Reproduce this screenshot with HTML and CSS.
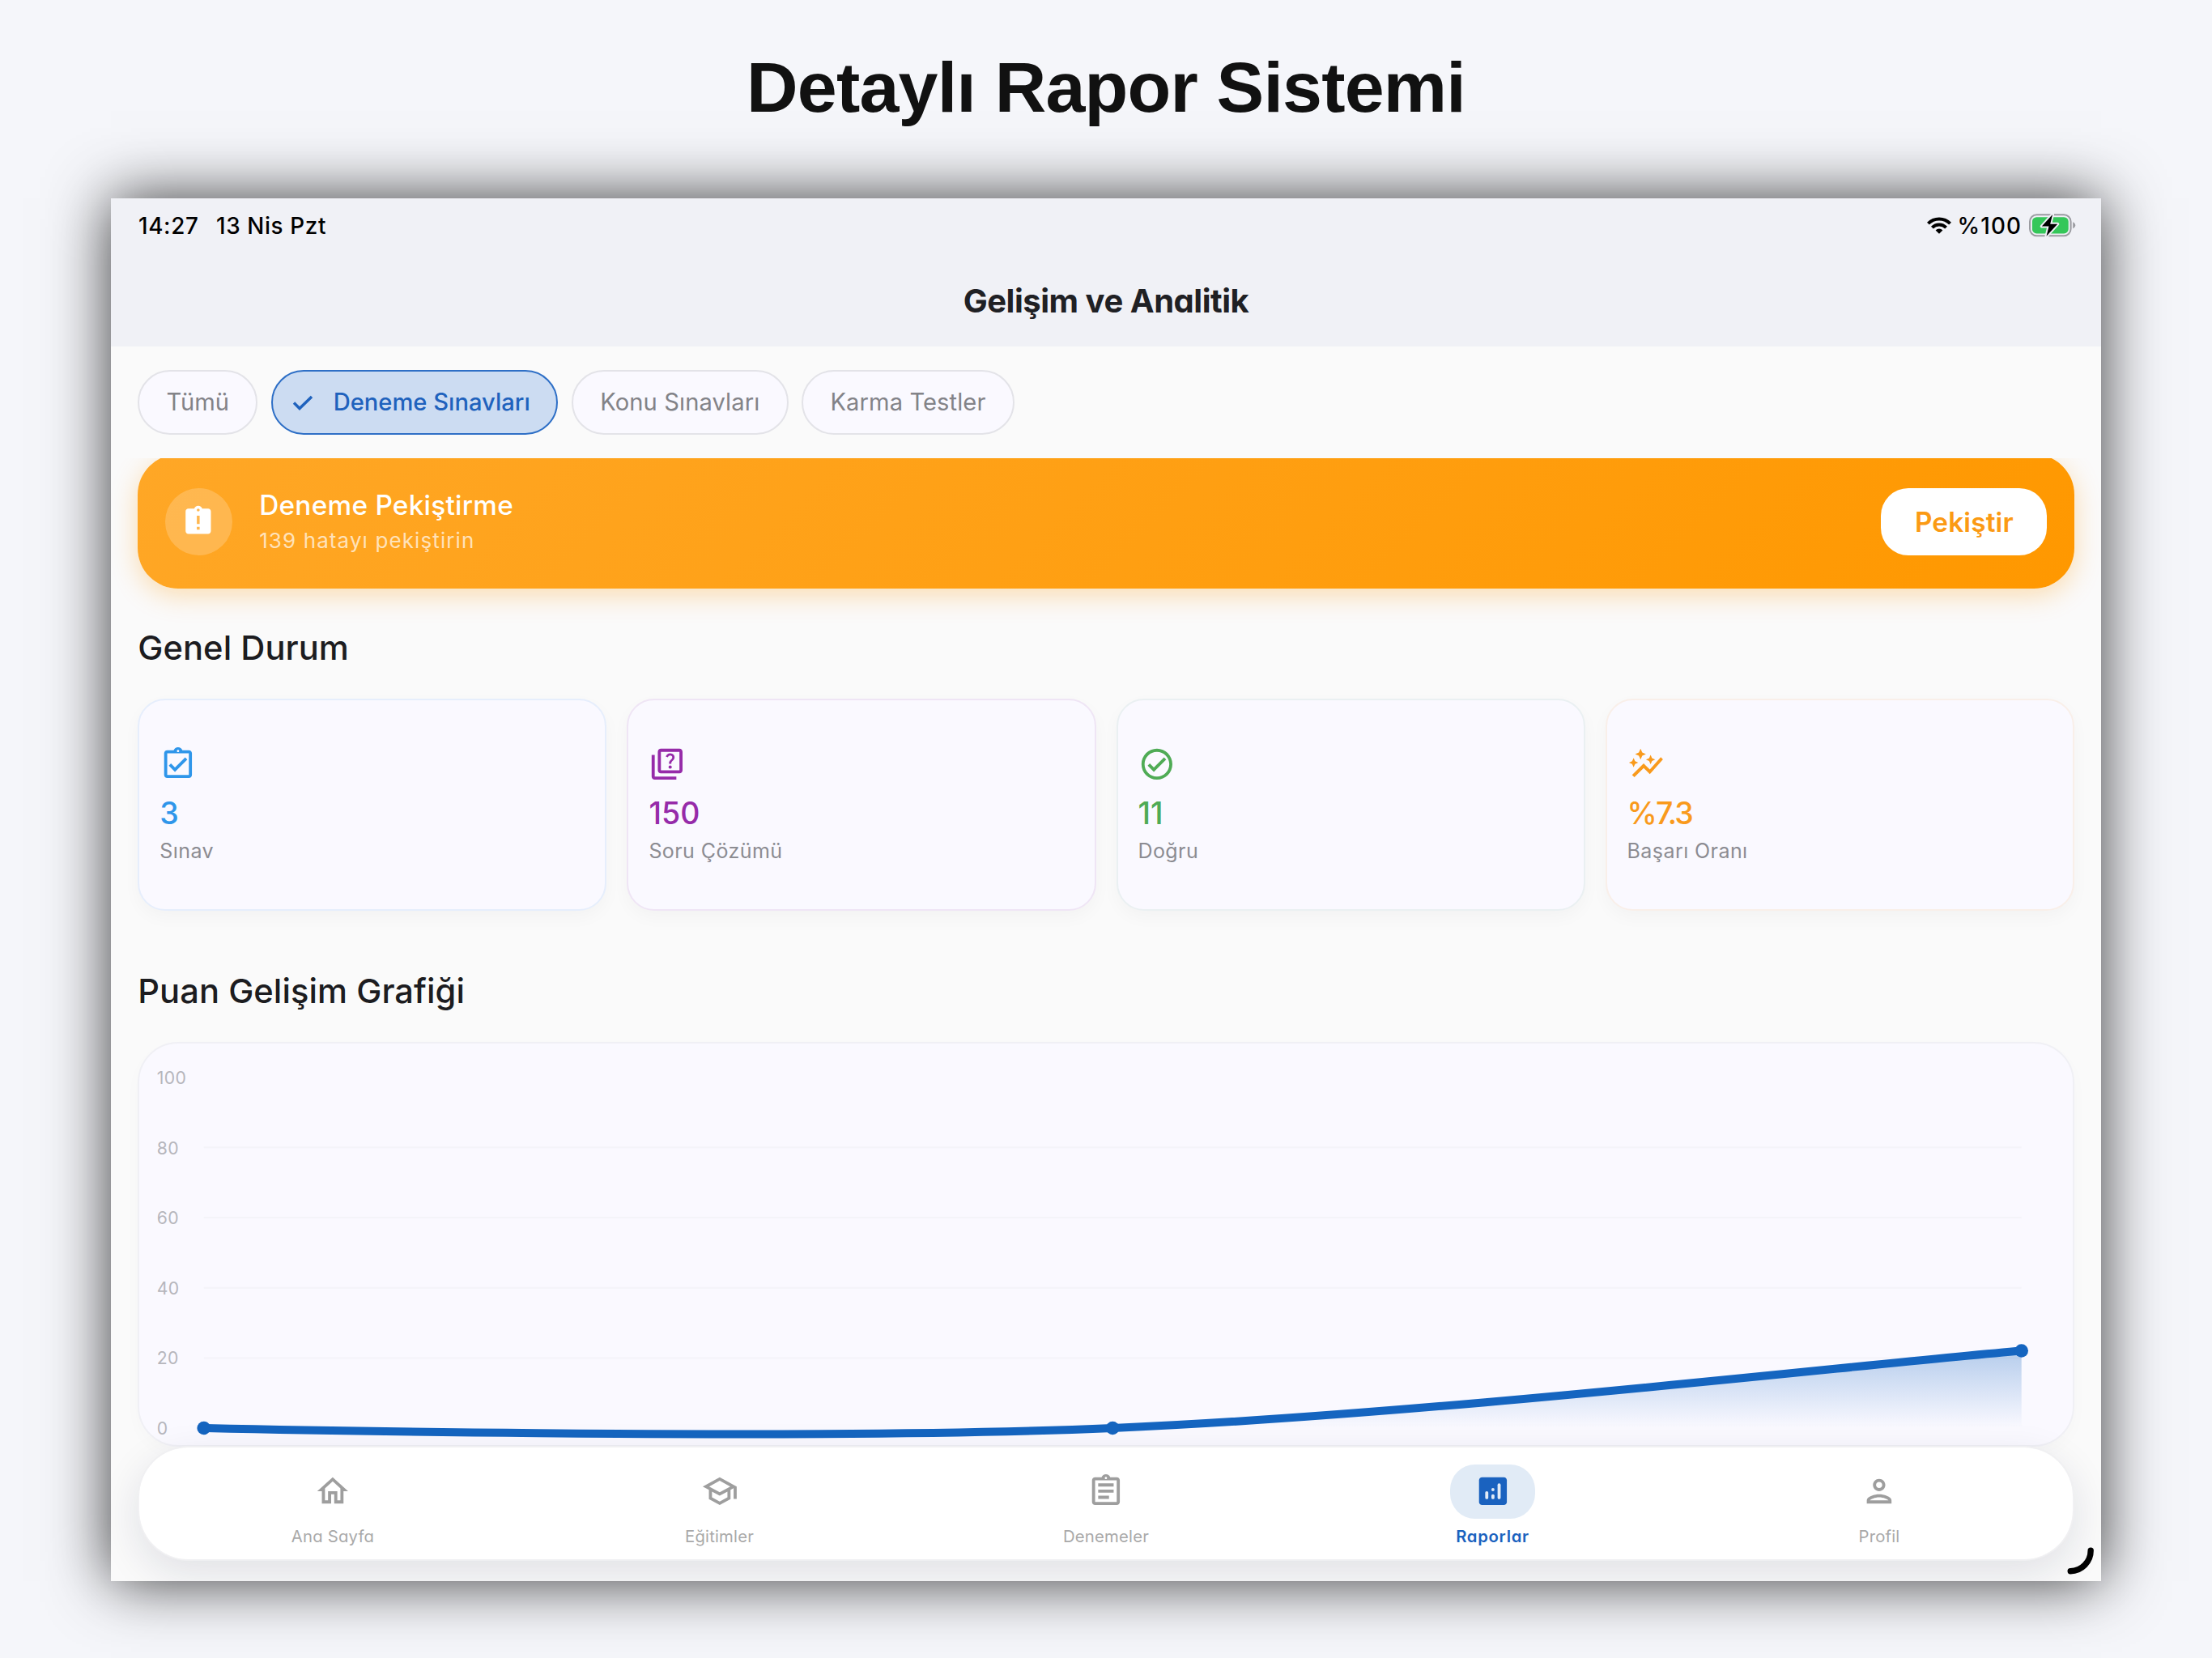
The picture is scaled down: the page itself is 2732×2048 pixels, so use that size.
FILE: index.html
```
<!DOCTYPE html>
<html lang="tr">
<head>
<meta charset="utf-8">
<title>Detaylı Rapor Sistemi</title>
<link rel="stylesheet" href="styles.css">
</head>
<body>
<h1 class="page-title">Detaylı Rapor Sistemi</h1>

<main class="screen">
  <div class="status-bar">
    <div class="status-left"><span>14:27</span><span>13 Nis Pzt</span></div>
    <div class="status-right">
      <svg class="wifi" viewBox="0 0 30 21" fill="none" stroke="#000" stroke-width="4">
        <path d="M1.4 8.2A19 19 0 0 1 28.6 8.2"/>
        <path d="M6.4 13.1A12 12 0 0 1 23.6 13.1"/>
        <path d="M15 20.8l-4.4-4.4a6.2 6.2 0 0 1 8.800 0z" fill="#000" stroke="none"/>
      </svg>
      <span class="percent">%100</span>
      <svg class="battery" viewBox="0 0 58 29">
        <rect x="1" y="1.300" width="50.600" height="26" rx="8.500" fill="none" stroke="#9b9ca1" stroke-width="2"/>
        <rect x="3.900" y="4.200" width="44.800" height="20.200" rx="5.500" fill="#34c759"/>
        <path d="M54.200 10.300c2 .8 3 2.300 3 4s-1 3.200-3 4z" fill="#9b9ca1"/>
        <path d="M29 1L15.800 15.600h8.700L21.500 27.800 35.200 12.700h-9z" fill="#000" stroke="#f0f1f6" stroke-width="4" stroke-linejoin="round" paint-order="stroke"/>
      </svg>
    </div>
  </div>
  <header class="app-bar">Gelişim ve Analitik</header>

  <nav class="chips">
    <span class="chip">Tümü</span>
    <span class="chip chip-on"><svg class="tick" viewBox="0 0 38 38"><path d="M8 19.500l7 7L30 12" fill="none" stroke="currentColor" stroke-width="3.400"/></svg>Deneme Sınavları</span>
    <span class="chip">Konu Sınavları</span>
    <span class="chip">Karma Testler</span>
  </nav>

  <div class="content">
    <section class="banner">
      <div class="banner-icon">
        <svg viewBox="0 0 24 24" fill="#fff"><path d="M19 3h-4.180C14.400 1.840 13.300 1 12 1s-2.400.84-2.820 2H5c-1.100 0-2 .9-2 2v14c0 1.100.9 2 2 2h14c1.100 0 2-.9 2-2V5c0-1.100-.9-2-2-2zm-6 15h-2v-2h2v2zm0-4h-2V8h2v6zm-1-9c-.55 0-1-.45-1-1s.45-1 1-1 1 .45 1 1-.45 1-1 1z"/></svg>
      </div>
      <div class="banner-text">
        <div class="banner-title">Deneme Pekiştirme</div>
        <div class="banner-sub">139 hatayı pekiştirin</div>
      </div>
      <div class="banner-button">Pekiştir</div>
    </section>

    <h2 class="heading">Genel Durum</h2>
    <section class="stats">
      <article class="stat stat-blue">
        <svg viewBox="0 0 24 24"><path fill-rule="evenodd" d="M19 3h-4.180C14.400 1.840 13.300 1 12 1s-2.400.84-2.820 2H5c-1.100 0-2 .9-2 2v14c0 1.100.9 2 2 2h14c1.100 0 2-.9 2-2V5c0-1.100-.9-2-2-2zM12 2.750c.41 0 .75.34.75.75s-.34.75-.75.75-.75-.34-.75-.75.34-.75.75-.75zM19 19H5V5h14zM16.590 7.580L10 14.170l-2.590-2.580L6 13l4 4 8-8z"/></svg>
        <strong>3</strong><span>Sınav</span>
      </article>
      <article class="stat stat-purple">
        <svg viewBox="0 0 24 24"><path d="M4 6H2v14c0 1.100.9 2 2 2h14v-2H4V6z"/><path d="M20 2H8c-1.100 0-2 .9-2 2v12c0 1.100.9 2 2 2h12c1.100 0 2-.9 2-2V4c0-1.100-.9-2-2-2zm0 14H8V4h12v12z"/><path d="M13.510 10.160c.41-.73 1.180-1.160 1.630-1.800.48-.68.21-1.940-1.140-1.940-.88 0-1.320.67-1.500 1.230l-1.370-.57C11.510 5.960 12.520 5 13.990 5c1.230 0 2.080.56 2.510 1.260.37.6.58 1.730.01 2.570-.63.93-1.230 1.210-1.560 1.810-.13.24-.18.4-.18 1.180h-1.520c.01-.41-.06-1.080.27-1.660z"/><circle cx="14" cy="13.950" r="1.050"/></svg>
        <strong>150</strong><span>Soru Çözümü</span>
      </article>
      <article class="stat stat-green">
        <svg viewBox="0 0 24 24"><path d="M16.590 7.580L10 14.170l-2.590-2.580L6 13l4 4 8-8zM12 2C6.480 2 2 6.480 2 12s4.480 10 10 10 10-4.480 10-10S17.520 2 12 2zm0 18c-4.420 0-8-3.580-8-8s3.580-8 8-8 8 3.580 8 8-3.580 8-8 8z"/></svg>
        <strong>11</strong><span>Doğru</span>
      </article>
      <article class="stat stat-orange">
        <svg viewBox="0 0 24 24"><path d="M14.060 9.940L12 9l2.060-.94L15 6l.94 2.060L18 9l-2.060.94L15 12zM4 14l.94-2.060L7 11l-2.060-.94L4 8l-.94 2.060L1 11l2.060.94zM8.500 9l1.090-2.410L12 5.500 9.590 4.410 8.500 2 7.410 4.410 5 5.500l2.410 1.090zM4.500 20.500l6-6.010 4 4L23 8.930l-1.410-1.410-7.090 7.970-4-4L3 19z"/></svg>
        <strong class="tight">%7.3</strong><span>Başarı Oranı</span>
      </article>
    </section>

    <h2 class="heading heading-chart">Puan Gelişim Grafiği</h2>
    <section class="chart-card">
      <svg class="chart" viewBox="172.500 1289 2387 496">
        <defs>
          <linearGradient id="area" gradientUnits="userSpaceOnUse" x1="0" y1="1668.500" x2="0" y2="1764">
            <stop offset="0" stop-color="#1565c0" stop-opacity=".3"/>
            <stop offset="1" stop-color="#1565c0" stop-opacity="0"/>
          </linearGradient>
        </defs>
        <g class="grid"><path d="M252 1417.300H2497M252 1504H2497M252 1590.700H2497M252 1677.400H2497"/></g>
        <g class="axis">
          <text x="194" y="1338.800">100</text>
          <text x="194" y="1425.500">80</text>
          <text x="194" y="1512">60</text>
          <text x="194" y="1598.700">40</text>
          <text x="194" y="1685.300">20</text>
          <text x="194" y="1772">0</text>
        </g>
        <path d="M252 1764C252 1764 981.200 1780.700 1374.500 1764C1767.400 1747.300 2300.600 1685 2497 1668.500V1764Z" fill="url(#area)"/>
        <path d="M252 1764C252 1764 981.200 1780.700 1374.500 1764C1767.400 1747.300 2300.600 1685 2497 1668.500" fill="none" stroke="#1565c0" stroke-width="10"/>
        <g fill="#1565c0"><circle cx="252" cy="1764" r="8.300"/><circle cx="1374.500" cy="1764" r="8.300"/><circle cx="2497" cy="1668.500" r="8.300"/></g>
      </svg>
    </section>
  </div>

  <nav class="tab-bar">
    <div class="tab"><span class="tab-icon"><svg viewBox="0 0 24 24"><path d="M12 5.690l5 4.500V18h-2v-6H9v6H7v-7.810l5-4.500M12 3L2 12h3v8h6v-6h2v6h6v-8h3L12 3z"/></svg></span><span class="tab-label">Ana Sayfa</span></div>
    <div class="tab"><span class="tab-icon"><svg viewBox="0 0 24 24"><path d="M12 3L1 9l4 2.180v6L12 21l7-3.820v-6l2-1.090V17h2V9L12 3zm6.820 6L12 12.720 5.180 9 12 5.280 18.820 9zM17 15.990l-5 2.730-5-2.730v-3.720L12 15l5-2.730v3.720z"/></svg></span><span class="tab-label">Eğitimler</span></div>
    <div class="tab"><span class="tab-icon"><svg viewBox="0 0 24 24"><path fill-rule="evenodd" d="M7 15h7v2H7zM7 11h10v2H7zM7 7h10v2H7zM19 3h-4.180C14.400 1.840 13.300 1 12 1s-2.400.84-2.820 2H5c-1.100 0-2 .9-2 2v14c0 1.100.9 2 2 2h14c1.100 0 2-.9 2-2V5c0-1.100-.9-2-2-2zM12 2.750c.41 0 .75.34.75.75s-.34.75-.75.75-.75-.34-.75-.75.34-.75.75-.75zM19 19H5V5h14z"/></svg></span><span class="tab-label">Denemeler</span></div>
    <div class="tab tab-on"><span class="tab-icon"><svg viewBox="0 0 24 24"><path d="M19 3H5c-1.100 0-2 .9-2 2v14c0 1.100.9 2 2 2h14c1.100 0 2-.9 2-2V5c0-1.100-.9-2-2-2z"/><g fill="#e1ebf6"><rect x="7" y="12" width="2" height="5.200" rx="1"/><circle cx="12" cy="11" r="1"/><rect x="11" y="14" width="2" height="3.200" rx="1"/><rect x="15" y="7" width="2" height="10.200" rx="1"/></g></svg></span><span class="tab-label">Raporlar</span></div>
    <div class="tab"><span class="tab-icon"><svg viewBox="0 0 24 24"><path d="M12 6c1.100 0 2 .9 2 2s-.9 2-2 2-2-.9-2-2 .9-2 2-2m0 10c2.700 0 5.800 1.290 6 2H6c.23-.72 3.310-2 6-2m0-12C9.790 4 8 5.790 8 8s1.790 4 4 4 4-1.790 4-4-1.790-4-4-4zm0 10c-2.670 0-8 1.340-8 4v2h16v-2c0-2.660-5.330-4-8-4z"/></svg></span><span class="tab-label">Profil</span></div>
  </nav>

  <svg class="corner-grip" viewBox="0 0 34 34"><path d="M29.200 4.200A25.500 25.500 0 0 1 4.200 29.700" fill="none" stroke="#000" stroke-width="7.400" stroke-linecap="round"/></svg>
</main>
</body>
</html>
```
FILE: styles.css
```
* { box-sizing: border-box; }

body {
  margin: 0;
  width: 2732px;
  height: 2048px;
  overflow: hidden;
  background: #f5f6fa;
  font-family: Inter, "Liberation Sans", sans-serif;
  display: flex;
  flex-direction: column;
  align-items: center;
}

.page-title {
  margin: 0;
  height: 244.5px;
  padding-top: 58px;
  font: bold 88px/100px "Liberation Sans", Arial, sans-serif;
  letter-spacing: -0.8px;
  color: #111;
}

.screen {
  position: relative;
  flex: none;
  width: 2458px;
  height: 1708.5px;
  background: #fafafa;
  box-shadow: 0 0 72px rgba(0, 0, 0, .77);
  overflow: hidden;
  display: flex;
  flex-direction: column;
}

/* status bar and title */
.status-bar {
  flex: none;
  height: 68px;
  padding: 0 31.5px 0 34px;
  background: #f0f1f6;
  display: flex;
  justify-content: space-between;
  align-items: center;
  font-size: 27.8px;
  font-weight: 500;
  letter-spacing: .65px;
  color: #000;
}
.status-left { display: flex; gap: 21.500px; }
.status-right { display: flex; align-items: center; }
.wifi { width: 30px; height: 21px; margin-right: 8px; }
.percent { letter-spacing: 1.1px; margin-right: 8.500px; }
.battery { width: 58px; height: 29px; }

.app-bar {
  flex: none;
  height: 115.5px;
  padding-top: 1.5px;
  background: #f0f1f6;
  display: flex;
  align-items: center;
  justify-content: center;
  font-size: 40px;
  font-weight: 700;
  letter-spacing: -0.47px;
  font-feature-settings: "cv11";
  color: #1f2024;
}

/* filter chips */
.chips {
  flex: none;
  height: 137.5px;
  padding: 0 33.3px;
  display: flex;
  align-items: center;
  gap: 16.7px;
}
.chip {
  height: 79.500px;
  padding: 0 33.2px;
  border: 2px solid #e3e3e8;
  border-radius: 40px;
  background: #faf9ff;
  display: flex;
  align-items: center;
  font-size: 29.17px;
  letter-spacing: .08px;
  color: #838388;
}
.chip-on {
  padding: 0 32.5px 0 18px;
  border-color: #2e6fc6;
  background: #ccdcf2;
  color: #1f62bd;
  font-weight: 500;
  letter-spacing: 0;
}
.tick { width: 38px; height: 38px; margin-right: 18.6px; }

/* scrolled area */
.content {
  flex: 1;
  min-height: 0;
  overflow: hidden;
  padding: 0 33.3px;
}

.banner {
  height: 166px;
  margin-top: -4.2px;
  padding: 0 33.3px;
  border-radius: 50px;
  background: linear-gradient(135deg, #ffa726, #ff9800);
  box-shadow: 0 8.3px 33px rgba(255, 152, 0, .3);
  display: flex;
  align-items: center;
  color: #fff;
}
.banner-icon {
  width: 83.3px;
  height: 83.3px;
  border-radius: 50%;
  background: rgba(255, 255, 255, .2);
  display: grid;
  place-items: center;
}
.banner-icon svg { width: 41.7px; height: 41.7px; }
.banner-text { flex: 1; padding-left: 33.3px; }
.banner-title { font-size: 33.33px; line-height: 46px; font-weight: 500; letter-spacing: .27px; }
.banner-sub { font-size: 26px; line-height: 41.4px; letter-spacing: 1.1px; color: rgba(255, 255, 255, .7); }
.banner-button {
  width: 205px;
  height: 83.5px;
  padding-top: 1.5px;
  border-radius: 34px;
  background: #fff;
  color: #fb9a14;
  font-size: 33.33px;
  font-weight: 600;
  letter-spacing: .15px;
  display: grid;
  place-items: center;
}

.heading {
  margin: 43.7px 0 34px;
  font-size: 41.67px;
  line-height: 58px;
  font-weight: 520;
  letter-spacing: .05px;
  color: #1c1c20;
}
.heading-chart { margin: 69.5px 0 34.300px; }

.stats { display: grid; grid-template-columns: repeat(4, 1fr); gap: 25px; }
.stat {
  height: 262.3px;
  padding: 1px 25px 0;
  border: 2px solid;
  border-radius: 34px;
  background: #faf9ff;
  box-shadow: 0 8px 21px rgba(0, 0, 0, .03);
  display: flex;
  flex-direction: column;
  justify-content: center;
}
.stat svg { width: 45.8px; height: 45.8px; fill: currentColor; margin-bottom: 12px; }
.stat strong { font-size: 37.5px; line-height: 52px; font-weight: 540; }
.stat .tight { letter-spacing: -1.9px; }
.stat span { margin-top: 4px; font-size: 25px; line-height: 33px; letter-spacing: .42px; color: #8c8c92; }
.stat-blue { color: #2f96ea; border-color: #e6eefc; }
.stat-purple { color: #962ba9; border-color: #efe5f5; }
.stat-green { color: #4fab55; border-color: #eaf0f2; }
.stat-orange { color: #f99a1c; border-color: #f9efe9; }

.chart-card {
  height: 500px;
  border: 2px solid #f0f0f5;
  border-radius: 50px;
  background: #faf9ff;
  box-shadow: 0 8px 21px rgba(0, 0, 0, .02);
}
.chart { display: block; width: 100%; height: 100%; }
.grid { stroke: #f4f4f9; stroke-width: 2; }
.axis { fill: #b6b6bc; font-size: 21.2px; letter-spacing: .4px; }

/* floating tab bar */
.tab-bar {
  position: absolute;
  left: 33.3px;
  right: 33.3px;
  bottom: 25px;
  height: 142px;
  padding: 20.500px 0 0;
  border: 2px solid rgba(240, 240, 242, .9);
  border-radius: 62.5px;
  background: #fff;
  background-clip: padding-box;
  box-shadow: 0 16px 50px rgba(15, 25, 60, .11);
  display: flex;
}
.tab {
  flex: 1;
  display: flex;
  flex-direction: column;
  align-items: center;
  color: #9e9e9e;
}
.tab-icon {
  width: 104.5px;
  height: 67px;
  border-radius: 31px;
  display: grid;
  place-items: center;
}
.tab-icon svg { width: 45.8px; height: 45.8px; fill: currentColor; }
.tab-label {
  margin-top: 9.5px;
  font-size: 20.3px;
  line-height: 26px;
  letter-spacing: .2px;
  font-feature-settings: "cv11";
  color: #a9a9a9;
}
.tab-on, .tab-on .tab-label { color: #1a62bf; }
.tab-on .tab-icon { background: #e1ebf6; }
.tab-on .tab-label { font-weight: 600; letter-spacing: .7px; }

.corner-grip {
  position: absolute;
  right: 8.5px;
  bottom: 8px;
  width: 34px;
  height: 34px;
}
```
